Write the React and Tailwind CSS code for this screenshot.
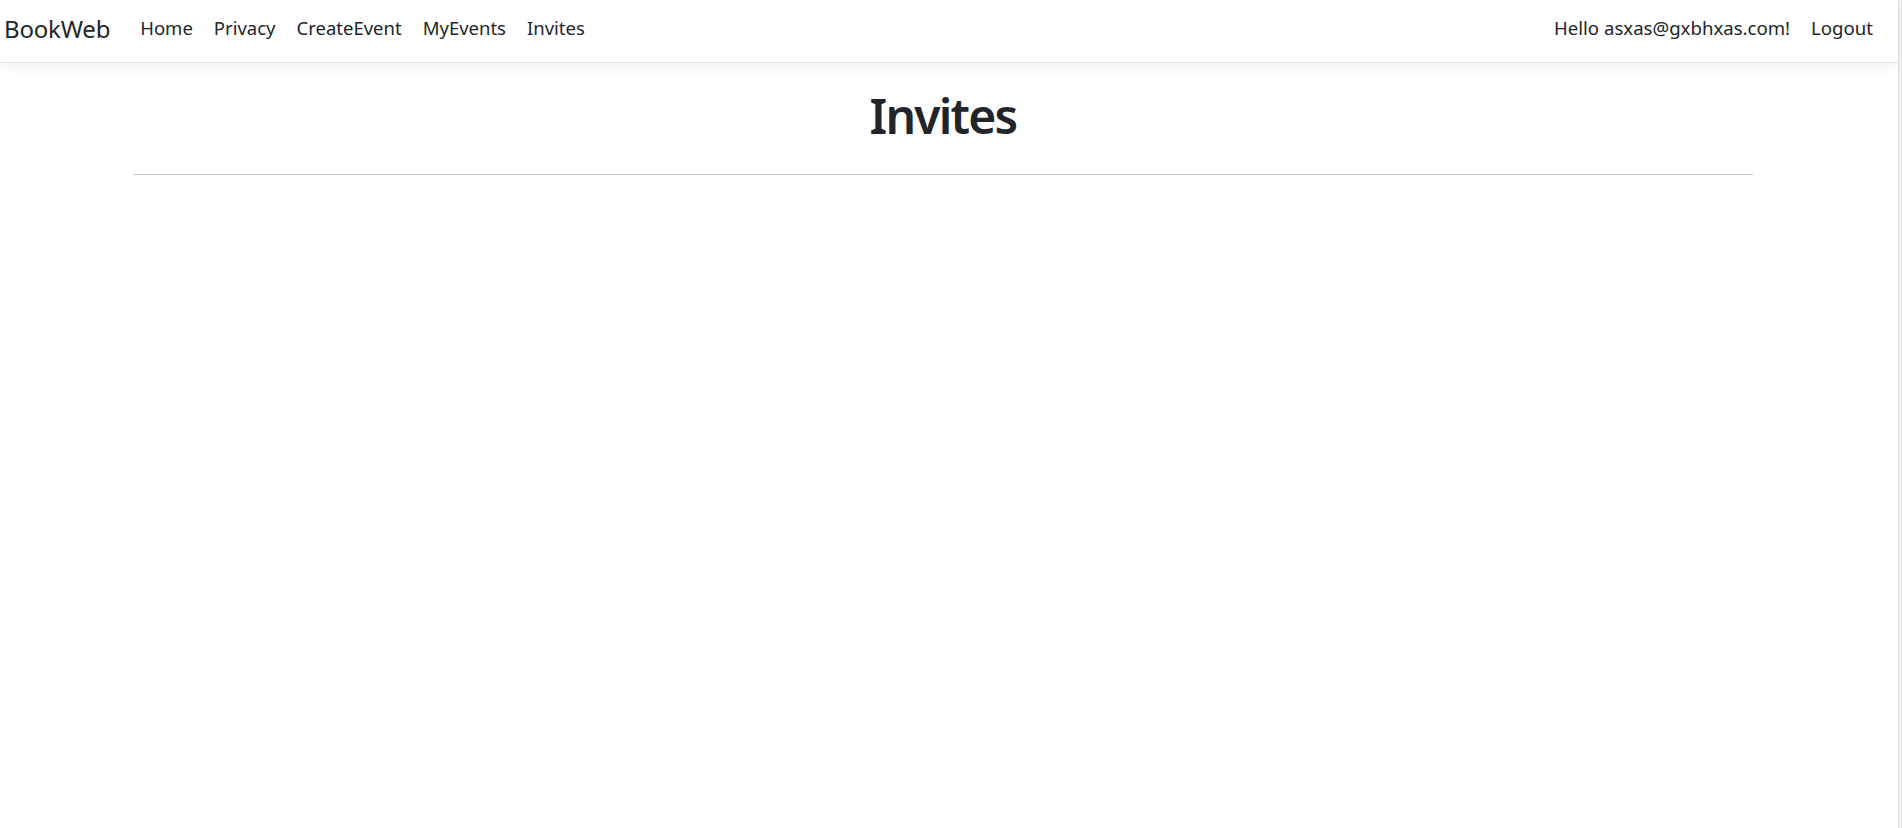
export default function App() {
  const font = { fontFamily: '"Noto Sans", "Open Sans", sans-serif' };
  const links = ["Home", "Privacy", "CreateEvent", "MyEvents", "Invites"];
  return (
    <div className="flex w-full h-[828px] bg-white" style={font}>
      <div className="flex-1 flex flex-col min-w-0">
        <nav className="h-[63px] flex items-center justify-between border-b border-[#dee2e6] bg-white shadow-[0_5px_15px_rgba(0,0,0,0.05)] relative z-10 pl-[4px] pr-[25px] pb-[5px] text-[#212529]">
          <div className="flex items-center">
            <span className="text-[24px] leading-none mr-[30px] tracking-[-0.2px]">BookWeb</span>
            <div className="flex items-center gap-[21px]">
              {links.map((l) => (
                <span key={l} className="text-[18.5px] leading-none">{l}</span>
              ))}
            </div>
          </div>
          <div className="flex items-center gap-[21px] text-[18.6px] leading-none">
            <span>Hello asxas@gxbhxas.com!</span>
            <span>Logout</span>
          </div>
        </nav>
        <main className="w-[1620px] ml-[133px]">
          <h1 className="text-center text-[48px] font-semibold leading-none text-[#212529] mt-[29px] mb-[34px] tracking-[-1.8px]">Invites</h1>
          <hr className="border-0 border-t border-[#c8c9ca]" />
        </main>
      </div>
      <div className="w-[4px] bg-[#f1f1f1] border-l border-[#e2e2e2]" />
    </div>
  );
}
